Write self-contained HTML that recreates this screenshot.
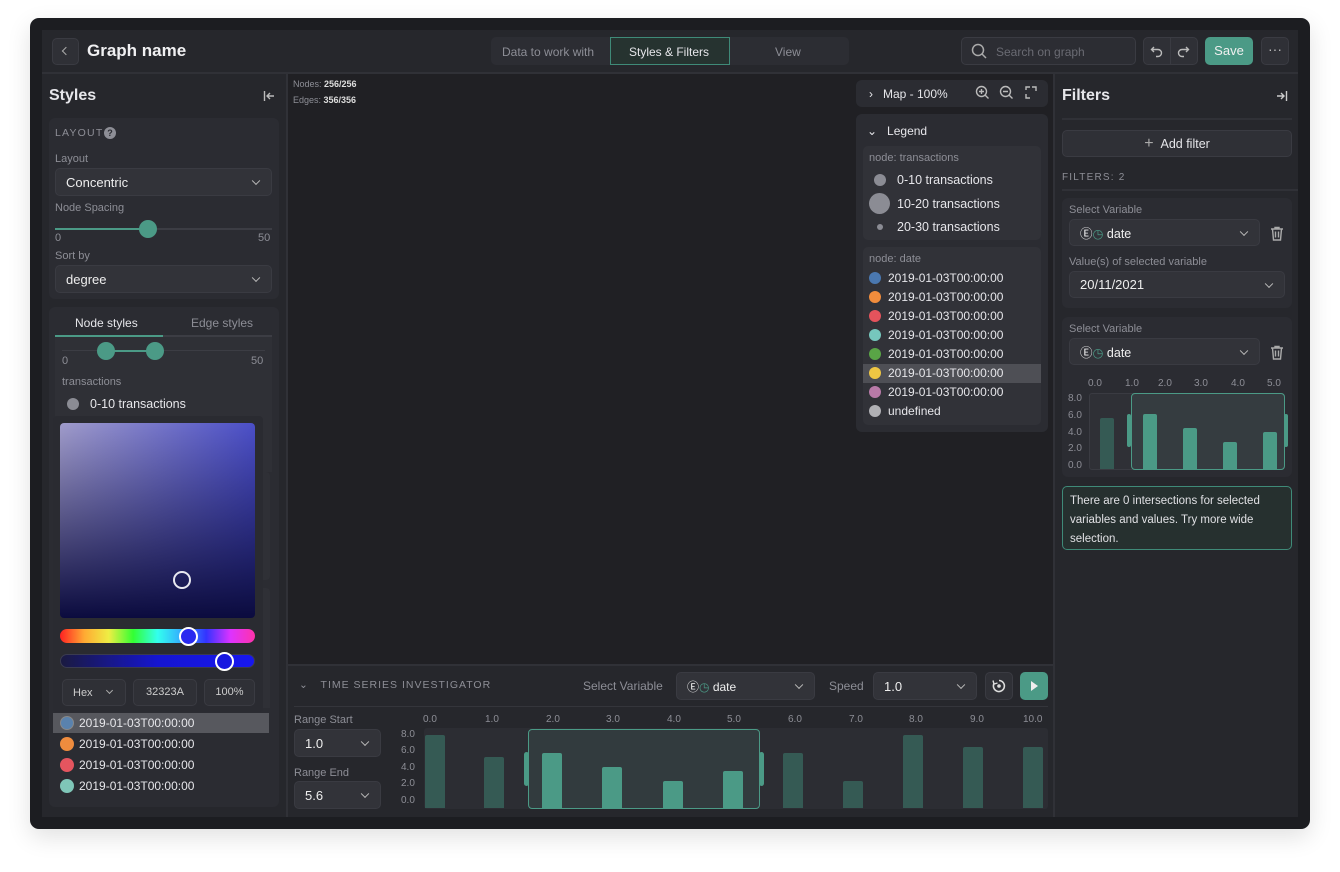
<!DOCTYPE html>
<html><head><meta charset="utf-8"><style>
*{box-sizing:border-box;margin:0;padding:0}
body{width:1340px;height:872px;background:#fff;font-family:"Liberation Sans",sans-serif;position:relative;overflow:hidden;color:#e6e6ea}
.a{position:absolute}
.win{left:30px;top:18px;width:1280px;height:811px;background:#1c1d21;border-radius:9px;box-shadow:0 8px 24px rgba(0,0,0,.12)}
.app{left:42px;top:30px;width:1256px;height:787px;background:#26272c}
.panel{background:#2b2c32;border-radius:6px}
.sel{background:#323339;border:1px solid #3a3b42;border-radius:5px;font-size:13px;color:#eee;padding-left:10px;display:flex;align-items:center}
.chev{position:absolute;right:12px;top:50%;width:6px;height:6px;border-right:1.4px solid #bbb;border-bottom:1.4px solid #bbb;transform:translateY(-70%) rotate(45deg)}
.lbl{font-size:11px;color:#8d8e96}
.t{font-size:12.5px;color:#e6e6ea;white-space:nowrap}
.dot{border-radius:50%;position:absolute}
.bar{position:absolute;background:#355a54;border-radius:2px 2px 0 0}
.bs{background:#4b9a86}
.ax{font-size:10px;color:#8d8e96;position:absolute}
.btn{background:#2f3036;border:1px solid #3a3b42;border-radius:5px}
</style></head><body>
<div class="a win"></div>
<div class="a app"></div>
<div class="a" style="left:42px;top:72px;width:1256px;height:2px;background:#303137"></div>
<div class="a btn" style="left:52px;top:38px;width:27px;height:27px;"></div>
<div class="a" style="left:63px;top:48px;width:6px;height:6px;border-left:1.5px solid #aaa;border-bottom:1.5px solid #aaa;transform:rotate(45deg)"></div>
<div class="a" style="left:87px;top:41px;font-size:17px;font-weight:bold;color:#f0f0f2">Graph name</div>
<div class="a" style="left:491px;top:37px;width:358px;height:28px;background:#2c2d33;border-radius:5px"></div>
<div class="a" style="left:610px;top:37px;width:120px;height:28px;background:#263330;border:1px solid #3f8a78"></div>
<div class="a lbl" style="left:502px;top:45px;font-size:12px">Data to work with</div>
<div class="a t" style="left:629px;top:45px;font-size:12px">Styles &amp; Filters</div>
<div class="a lbl" style="left:775px;top:45px;font-size:12px">View</div>
<div class="a btn" style="left:961px;top:37px;width:175px;height:28px;background:#2c2d33"></div>
<svg class="a" style="left:971px;top:43px" width="16" height="16"><circle cx="7" cy="7" r="5.5" fill="none" stroke="#aaa" stroke-width="1.5"/><path d="M11 11l4 4" stroke="#aaa" stroke-width="1.5"/></svg>
<div class="a lbl" style="left:996px;top:45px;font-size:12px;color:#6a6b73">Search on graph</div>
<div class="a btn" style="left:1143px;top:37px;width:55px;height:28px"></div>
<div class="a" style="left:1170px;top:37px;width:1px;height:28px;background:#3a3b42"></div>
<svg class="a" style="left:1150px;top:44px" width="14" height="14"><path d="M4 3L1.5 5.5 4 8M1.5 5.5H8a3.5 3.5 0 010 7H6" fill="none" stroke="#bbb" stroke-width="1.4"/></svg>
<svg class="a" style="left:1176px;top:44px" width="14" height="14"><path d="M10 3l2.5 2.5L10 8M12.5 5.5H6a3.5 3.5 0 000 7h2" fill="none" stroke="#bbb" stroke-width="1.4"/></svg>
<div class="a" style="left:1205px;top:37px;width:48px;height:28px;background:#4b9a86;border-radius:5px;font-size:13px;color:#f0f0f0;text-align:center;line-height:28px">Save</div>
<div class="a btn" style="left:1261px;top:37px;width:28px;height:28px;color:#bbb;text-align:center;line-height:22px;font-size:14px">···</div>

<div class="a" style="left:286px;top:74px;width:2px;height:743px;background:#303137"></div>
<div class="a" style="left:49px;top:87px;font-size:16px;font-weight:bold">Styles</div>
<svg class="a" style="left:263px;top:90px" width="12" height="12"><path d="M1.5 1v10M11 6H4M7 3L4 6l3 3" fill="none" stroke="#bbb" stroke-width="1.4"/></svg>
<div class="a panel" style="left:49px;top:118px;width:230px;height:181px"></div>
<div class="a lbl" style="left:55px;top:127px;letter-spacing:1.2px;font-size:10.5px">LAYOUT</div>
<div class="a dot" style="left:104px;top:127px;width:12px;height:12px;background:#8d8e96;color:#2b2c32;font-size:9px;text-align:center;line-height:12px;font-weight:bold">?</div>
<div class="a lbl" style="left:55px;top:153px">Layout</div>
<div class="a sel" style="left:55px;top:168px;width:217px;height:28px">Concentric<span class="chev"></span></div>
<div class="a lbl" style="left:55px;top:202px">Node Spacing</div>
<div class="a" style="left:55px;top:228px;width:217px;height:2px;background:#3c3d44"></div>
<div class="a" style="left:55px;top:228px;width:93px;height:2px;background:#4b9a86"></div>
<div class="a dot" style="left:139px;top:220px;width:18px;height:18px;background:#4b9a86"></div>
<div class="a lbl" style="left:55px;top:232px">0</div>
<div class="a lbl" style="left:258px;top:232px">50</div>
<div class="a lbl" style="left:55px;top:250px">Sort by</div>
<div class="a sel" style="left:55px;top:265px;width:217px;height:28px">degree<span class="chev"></span></div>

<div class="a panel" style="left:49px;top:307px;width:230px;height:500px"></div>
<div class="a t" style="left:75px;top:316px;font-size:12px">Node styles</div>
<div class="a lbl" style="left:191px;top:316px;font-size:12px">Edge styles</div>
<div class="a" style="left:55px;top:335px;width:217px;height:2px;background:#3c3d44"></div>
<div class="a" style="left:55px;top:335px;width:108px;height:2px;background:#4b9a86"></div>
<div class="a" style="left:55px;top:337px;width:217px;height:135px;background:#2f3036"></div>
<div class="a" style="left:62px;top:350px;width:203px;height:1px;background:#3c3d44"></div>
<div class="a" style="left:106px;top:350px;width:49px;height:2px;background:#4b9a86"></div>
<div class="a dot" style="left:97px;top:342px;width:18px;height:18px;background:#4b9a86"></div>
<div class="a dot" style="left:146px;top:342px;width:18px;height:18px;background:#4b9a86"></div>
<div class="a lbl" style="left:62px;top:355px">0</div>
<div class="a lbl" style="left:251px;top:355px">50</div>
<div class="a lbl" style="left:62px;top:376px">transactions</div>
<div class="a dot" style="left:67px;top:398px;width:12px;height:12px;background:#8b8c94"></div>
<div class="a t" style="left:90px;top:397px">0-10 transactions</div>
<div class="a" style="left:262px;top:472px;width:8px;height:108px;background:#2f3036;border-radius:0 4px 4px 0"></div>
<div class="a" style="left:262px;top:588px;width:8px;height:120px;background:#2f3036;border-radius:0 4px 0 0"></div>
<div class="a" style="left:53px;top:416px;width:210px;height:296px;background:#2a2b31;border-radius:4px"></div>
<div class="a" style="left:60px;top:423px;width:195px;height:195px;border-radius:4px;background:linear-gradient(to top,#0b0b3e,rgba(11,11,62,0)),linear-gradient(to right,#a09ccb,#4b4fc8)"></div>
<div class="a dot" style="left:173px;top:571px;width:18px;height:18px;border:2px solid #e8e8f0"></div>
<div class="a" style="left:60px;top:629px;width:195px;height:14px;border-radius:7px;background:linear-gradient(to right,#f22,#fa3,#ee4,#3f3,#3fe,#3af,#33f,#d3f,#f3a)"></div>
<div class="a dot" style="left:179px;top:627px;width:19px;height:19px;border:2px solid #fff;background:#2a2af0"></div>
<div class="a" style="left:60px;top:654px;width:195px;height:14px;border-radius:7px;background:linear-gradient(to right,#1a1a40,#1515d0,#1717f0);border:1px solid #3a3b50"></div>
<div class="a dot" style="left:215px;top:652px;width:19px;height:19px;border:2px solid #fff;background:#1717e0"></div>
<div class="a btn" style="left:62px;top:679px;width:64px;height:27px;font-size:11px;color:#ccc;padding:7px 0 0 10px">Hex</div>
<div class="a" style="left:107px;top:688px;width:5px;height:5px;border-right:1.3px solid #aaa;border-bottom:1.3px solid #aaa;transform:rotate(45deg)"></div>
<div class="a btn" style="left:133px;top:679px;width:64px;height:27px;font-size:11px;color:#ccc;text-align:center;line-height:25px">32323A</div>
<div class="a btn" style="left:204px;top:679px;width:51px;height:27px;font-size:11px;color:#ccc;text-align:center;line-height:25px">100%</div>
<div class="a" style="left:53px;top:713px;width:216px;height:20px;background:#57585e"></div>
<div class="a dot" style="left:60px;top:716px;width:14px;height:14px;background:#5a82ad;border:1px solid #888"></div>
<div class="a t" style="left:79px;top:716px;font-size:12px">2019-01-03T00:00:00</div>
<div class="a dot" style="left:60px;top:737px;width:14px;height:14px;background:#ef8c3e"></div>
<div class="a t" style="left:79px;top:737px;font-size:12px">2019-01-03T00:00:00</div>
<div class="a dot" style="left:60px;top:758px;width:14px;height:14px;background:#e4555f"></div>
<div class="a t" style="left:79px;top:758px;font-size:12px">2019-01-03T00:00:00</div>
<div class="a dot" style="left:60px;top:779px;width:14px;height:14px;background:#7fc6b8"></div>
<div class="a t" style="left:79px;top:779px;font-size:12px">2019-01-03T00:00:00</div>

<div class="a" style="left:288px;top:74px;width:765px;height:590px;background:#202024"></div>
<div class="a" style="left:293px;top:79px;font-size:9px;color:#8d8e96">Nodes: <b style="color:#ddd">256/256</b></div>
<div class="a" style="left:293px;top:95px;font-size:9px;color:#8d8e96">Edges: <b style="color:#ddd">356/356</b></div>
<div class="a panel" style="left:856px;top:80px;width:192px;height:27px"></div>
<div class="a t" style="left:869px;top:87px;font-size:12px">›&nbsp;&nbsp;&nbsp;Map - 100%</div>
<svg class="a" style="left:975px;top:85px" width="62" height="16"><g fill="none" stroke="#bbb" stroke-width="1.4"><circle cx="6.5" cy="6.5" r="5"/><path d="M10 10l3.5 3.5M4 6.5h5M6.5 4v5"/><circle cx="30.5" cy="6.5" r="5"/><path d="M34 10l3.5 3.5M28 6.5h5"/><path d="M51 5V2h4M57 2h4v4M51 9v4h4"/></g></svg>
<div class="a panel" style="left:856px;top:114px;width:192px;height:318px"></div>
<div class="a t" style="left:867px;top:124px;font-size:12px">⌄&nbsp;&nbsp;&nbsp;Legend</div>
<div class="a" style="left:863px;top:146px;width:178px;height:94px;background:#313238;border-radius:5px"></div>
<div class="a lbl" style="left:869px;top:152px">node: transactions</div>
<div class="a dot" style="left:874px;top:174px;width:12px;height:12px;background:#8b8c94"></div>
<div class="a t" style="left:897px;top:173px">0-10 transactions</div>
<div class="a dot" style="left:869px;top:193px;width:21px;height:21px;background:#8b8c94"></div>
<div class="a t" style="left:897px;top:197px">10-20 transactions</div>
<div class="a dot" style="left:877px;top:224px;width:6px;height:6px;background:#8b8c94"></div>
<div class="a t" style="left:897px;top:220px">20-30 transactions</div>
<div class="a" style="left:863px;top:247px;width:178px;height:178px;background:#313238;border-radius:5px"></div>
<div class="a lbl" style="left:869px;top:253px">node: date</div>
<div class="a" style="left:863px;top:364px;width:178px;height:19px;background:#4e4f55"></div>
<div class="a dot" style="left:869px;top:272px;width:12px;height:12px;background:#4a78b0"></div><div class="a t" style="left:888px;top:271px;font-size:12px">2019-01-03T00:00:00</div>
<div class="a dot" style="left:869px;top:291px;width:12px;height:12px;background:#f08c3c"></div><div class="a t" style="left:888px;top:290px;font-size:12px">2019-01-03T00:00:00</div>
<div class="a dot" style="left:869px;top:310px;width:12px;height:12px;background:#e4535c"></div><div class="a t" style="left:888px;top:309px;font-size:12px">2019-01-03T00:00:00</div>
<div class="a dot" style="left:869px;top:329px;width:12px;height:12px;background:#76c7bd"></div><div class="a t" style="left:888px;top:328px;font-size:12px">2019-01-03T00:00:00</div>
<div class="a dot" style="left:869px;top:348px;width:12px;height:12px;background:#59a446"></div><div class="a t" style="left:888px;top:347px;font-size:12px">2019-01-03T00:00:00</div>
<div class="a dot" style="left:869px;top:367px;width:12px;height:12px;background:#eec643"></div><div class="a t" style="left:888px;top:366px;font-size:12px">2019-01-03T00:00:00</div>
<div class="a dot" style="left:869px;top:386px;width:12px;height:12px;background:#b87aa8"></div><div class="a t" style="left:888px;top:385px;font-size:12px">2019-01-03T00:00:00</div>
<div class="a dot" style="left:869px;top:405px;width:12px;height:12px;background:#b0b0b4"></div><div class="a t" style="left:888px;top:404px;font-size:12px">undefined</div>

<div class="a" style="left:288px;top:664px;width:765px;height:2px;background:#303137"></div>
<div class="a" style="left:288px;top:666px;width:765px;height:150px;background:#26272c"></div>
<div class="a lbl" style="left:299px;top:679px;font-size:10.5px;letter-spacing:1px">⌄&nbsp;&nbsp;&nbsp;TIME SERIES INVESTIGATOR</div>
<div class="a lbl" style="left:583px;top:679px;font-size:12px">Select Variable</div>
<div class="a sel" style="left:676px;top:672px;width:139px;height:28px"><span style="font-size:12px">Ⓔ<span style="color:#4b9a86">◷</span> date</span><span class="chev"></span></div>
<div class="a lbl" style="left:829px;top:679px;font-size:12px">Speed</div>
<div class="a sel" style="left:873px;top:672px;width:104px;height:28px">1.0<span class="chev"></span></div>
<div class="a btn" style="left:985px;top:672px;width:28px;height:28px"></div>
<svg class="a" style="left:991px;top:678px" width="16" height="16"><path d="M8 2.5A5.5 5.5 0 1 1 3 5.5" fill="none" stroke="#ddd" stroke-width="1.6"/><path d="M2 2.5l1 3.5 3.5-1" fill="none" stroke="#ddd" stroke-width="1.4"/><circle cx="8" cy="8" r="1.8" fill="#ddd"/></svg>
<div class="a" style="left:1020px;top:672px;width:28px;height:28px;background:#4b9a86;border-radius:5px"></div>
<div class="a" style="left:1031px;top:681px;width:0;height:0;border-left:7px solid #eee;border-top:5px solid transparent;border-bottom:5px solid transparent"></div>
<div class="a" style="left:294px;top:706px;width:754px;height:1px;background:#34353b"></div>
<div class="a lbl" style="left:294px;top:714px">Range Start</div>
<div class="a sel" style="left:294px;top:729px;width:87px;height:28px">1.0<span class="chev"></span></div>
<div class="a lbl" style="left:294px;top:767px">Range End</div>
<div class="a sel" style="left:294px;top:781px;width:87px;height:28px">5.6<span class="chev"></span></div>
<div class="a" style="left:424px;top:728px;width:624px;height:81px;background:#2c2d33;border-radius:3px"></div>
<div class="ax" style="left:401px;top:729px">8.0</div><div class="ax" style="left:401px;top:745px">6.0</div><div class="ax" style="left:401px;top:762px">4.0</div><div class="ax" style="left:401px;top:778px">2.0</div><div class="ax" style="left:401px;top:795px">0.0</div>
<div class="ax" style="left:423px;top:714px">0.0</div><div class="ax" style="left:485px;top:714px">1.0</div><div class="ax" style="left:546px;top:714px">2.0</div><div class="ax" style="left:606px;top:714px">3.0</div><div class="ax" style="left:667px;top:714px">4.0</div><div class="ax" style="left:727px;top:714px">5.0</div><div class="ax" style="left:788px;top:714px">6.0</div><div class="ax" style="left:849px;top:714px">7.0</div><div class="ax" style="left:909px;top:714px">8.0</div><div class="ax" style="left:970px;top:714px">9.0</div><div class="ax" style="left:1023px;top:714px">10.0</div>
<div class="a" style="left:528px;top:729px;width:232px;height:80px;background:#323b3e;border:1px solid #4b9a86;border-radius:4px"></div>
<div class="a" style="left:524px;top:752px;width:5px;height:34px;background:#4b9a86;border-radius:3px"></div>
<div class="a" style="left:759px;top:752px;width:5px;height:34px;background:#4b9a86;border-radius:3px"></div>
<div class="bar" style="left:425px;top:735px;width:20px;height:73px"></div>
<div class="bar" style="left:484px;top:757px;width:20px;height:51px"></div>
<div class="bar bs" style="left:542px;top:753px;width:20px;height:55px"></div>
<div class="bar bs" style="left:602px;top:767px;width:20px;height:41px"></div>
<div class="bar bs" style="left:663px;top:781px;width:20px;height:27px"></div>
<div class="bar bs" style="left:723px;top:771px;width:20px;height:37px"></div>
<div class="bar" style="left:783px;top:753px;width:20px;height:55px"></div>
<div class="bar" style="left:843px;top:781px;width:20px;height:27px"></div>
<div class="bar" style="left:903px;top:735px;width:20px;height:73px"></div>
<div class="bar" style="left:963px;top:747px;width:20px;height:61px"></div>
<div class="bar" style="left:1023px;top:747px;width:20px;height:61px"></div>

<div class="a" style="left:1053px;top:74px;width:2px;height:743px;background:#303137"></div>
<div class="a" style="left:1062px;top:87px;font-size:16px;font-weight:bold">Filters</div>
<svg class="a" style="left:1276px;top:90px" width="12" height="12"><path d="M10.5 1v10M1 6h7M5 3l3 3-3 3" fill="none" stroke="#ccc" stroke-width="1.4"/></svg>
<div class="a" style="left:1062px;top:118px;width:230px;height:2px;background:#303137"></div>
<div class="a btn" style="left:1062px;top:130px;width:230px;height:27px;text-align:center;line-height:26px;font-size:12.5px;color:#e6e6ea"><span style="color:#aaa;font-size:16px">+</span>&nbsp;&nbsp;Add filter</div>
<div class="a lbl" style="left:1062px;top:172px;letter-spacing:1.2px;font-size:10px">FILTERS: 2</div>
<div class="a" style="left:1062px;top:189px;width:236px;height:2px;background:#303137"></div>
<div class="a panel" style="left:1062px;top:198px;width:230px;height:110px"></div>
<div class="a lbl" style="left:1069px;top:204px">Select Variable</div>
<div class="a sel" style="left:1069px;top:219px;width:191px;height:27px"><span style="font-size:12.5px">Ⓔ<span style="color:#4b9a86">◷</span> date</span><span class="chev"></span></div>
<svg class="a" style="left:1270px;top:226px" width="14" height="15"><path d="M1 3h12M5 3V1.5h4V3M2.5 3l1 11h7l1-11M5.5 5.5v6M8.5 5.5v6" fill="none" stroke="#aaa" stroke-width="1.4"/></svg>
<div class="a lbl" style="left:1069px;top:256px">Value(s) of selected variable</div>
<div class="a sel" style="left:1069px;top:271px;width:216px;height:27px">20/11/2021<span class="chev"></span></div>
<div class="a panel" style="left:1062px;top:317px;width:230px;height:160px"></div>
<div class="a lbl" style="left:1069px;top:323px">Select Variable</div>
<div class="a sel" style="left:1069px;top:338px;width:191px;height:27px"><span style="font-size:12.5px">Ⓔ<span style="color:#4b9a86">◷</span> date</span><span class="chev"></span></div>
<svg class="a" style="left:1270px;top:345px" width="14" height="15"><path d="M1 3h12M5 3V1.5h4V3M2.5 3l1 11h7l1-11M5.5 5.5v6M8.5 5.5v6" fill="none" stroke="#aaa" stroke-width="1.4"/></svg>
<div class="ax" style="left:1088px;top:378px">0.0</div><div class="ax" style="left:1125px;top:378px">1.0</div><div class="ax" style="left:1158px;top:378px">2.0</div><div class="ax" style="left:1194px;top:378px">3.0</div><div class="ax" style="left:1231px;top:378px">4.0</div><div class="ax" style="left:1267px;top:378px">5.0</div>
<div class="ax" style="left:1068px;top:393px">8.0</div><div class="ax" style="left:1068px;top:410px">6.0</div><div class="ax" style="left:1068px;top:427px">4.0</div><div class="ax" style="left:1068px;top:443px">2.0</div><div class="ax" style="left:1068px;top:460px">0.0</div>
<div class="a" style="left:1089px;top:393px;width:196px;height:77px;background:#2f3036;border:1px solid #3a3b42;border-radius:3px"></div>
<div class="a" style="left:1131px;top:393px;width:154px;height:77px;background:#353c40;border:1px solid #4b9a86;border-radius:4px"></div>
<div class="a" style="left:1127px;top:414px;width:4px;height:33px;background:#4b9a86;border-radius:2px"></div>
<div class="a" style="left:1284px;top:414px;width:4px;height:33px;background:#4b9a86;border-radius:2px"></div>
<div class="bar" style="left:1100px;top:418px;width:14px;height:51px"></div>
<div class="bar bs" style="left:1143px;top:414px;width:14px;height:55px"></div>
<div class="bar bs" style="left:1183px;top:428px;width:14px;height:41px"></div>
<div class="bar bs" style="left:1223px;top:442px;width:14px;height:27px"></div>
<div class="bar bs" style="left:1263px;top:432px;width:14px;height:37px"></div>
<div class="a" style="left:1062px;top:486px;width:230px;height:64px;background:#26302f;border:1px solid #3f8a78;border-radius:5px;padding:5px 7px;font-size:11.5px;line-height:19px;color:#e0e0e4">There are 0 intersections for selected variables and values. Try more wide selection.</div>
</body></html>
